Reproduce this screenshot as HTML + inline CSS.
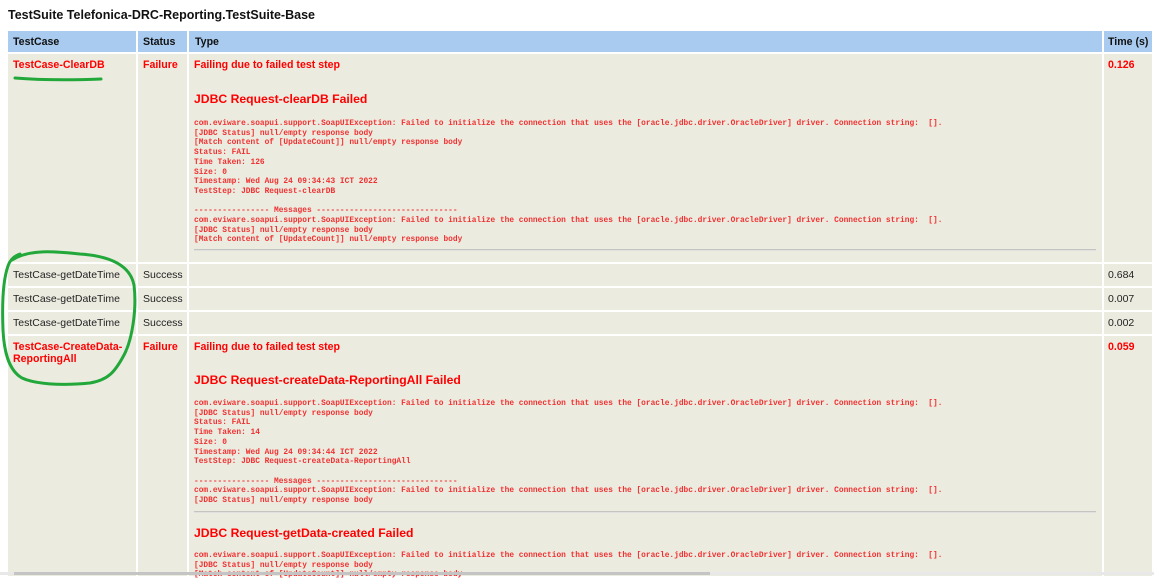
<!DOCTYPE html>
<html><head><meta charset="utf-8"><style>
*{margin:0;padding:0;box-sizing:border-box}
body{width:1154px;height:575px;overflow:hidden;background:#fff;position:relative;font-family:"Liberation Sans",Arial,sans-serif}
.a{position:absolute}
.h{background:#a9cbef}
.c{background:#ecebe0}
.ht{font-weight:bold;font-size:10.6px;color:#111}
.t{font-size:10.5px;color:#222;white-space:nowrap}
.r{color:#f00;font-weight:bold;font-size:10.6px;white-space:nowrap}
.j{color:#f00;font-weight:bold;font-size:12.2px;white-space:nowrap}
.m{font-family:"Liberation Mono",monospace;font-size:7.85px;line-height:9.7px;color:#f03030;white-space:pre;font-weight:bold}
.hr{height:2px;background:#c4c4c0;border-bottom:1px solid #e0e0e0}
</style></head><body>
<div class="a" style="left:8px;top:8px;font-size:12.5px;font-weight:bold;color:#111">TestSuite Telefonica-DRC-Reporting.TestSuite-Base</div>

<div class="a h" style="left:8px;top:31px;width:128px;height:21px"></div>
<div class="a h" style="left:138px;top:31px;width:49px;height:21px"></div>
<div class="a h" style="left:189px;top:31px;width:913px;height:21px"></div>
<div class="a h" style="left:1104px;top:31px;width:48px;height:21px"></div>
<div class="a ht" style="left:13px;top:36px">TestCase</div>
<div class="a ht" style="left:143px;top:36px">Status</div>
<div class="a ht" style="left:195px;top:36px">Type</div>
<div class="a ht" style="left:1108px;top:36px">Time (s)</div>

<div class="a c" style="left:8px;top:54px;width:128px;height:208px"></div>
<div class="a c" style="left:138px;top:54px;width:49px;height:208px"></div>
<div class="a c" style="left:189px;top:54px;width:913px;height:208px"></div>
<div class="a c" style="left:1104px;top:54px;width:48px;height:208px"></div>

<div class="a c" style="left:8px;top:264px;width:128px;height:22px"></div>
<div class="a c" style="left:138px;top:264px;width:49px;height:22px"></div>
<div class="a c" style="left:189px;top:264px;width:913px;height:22px"></div>
<div class="a c" style="left:1104px;top:264px;width:48px;height:22px"></div>
<div class="a c" style="left:8px;top:288px;width:128px;height:22px"></div>
<div class="a c" style="left:138px;top:288px;width:49px;height:22px"></div>
<div class="a c" style="left:189px;top:288px;width:913px;height:22px"></div>
<div class="a c" style="left:1104px;top:288px;width:48px;height:22px"></div>
<div class="a c" style="left:8px;top:312px;width:128px;height:22px"></div>
<div class="a c" style="left:138px;top:312px;width:49px;height:22px"></div>
<div class="a c" style="left:189px;top:312px;width:913px;height:22px"></div>
<div class="a c" style="left:1104px;top:312px;width:48px;height:22px"></div>

<div class="a c" style="left:8px;top:336px;width:128px;height:240px"></div>
<div class="a c" style="left:138px;top:336px;width:49px;height:240px"></div>
<div class="a c" style="left:189px;top:336px;width:913px;height:240px"></div>
<div class="a c" style="left:1104px;top:336px;width:48px;height:240px"></div>

<div class="a r" style="left:13px;top:59px">TestCase-ClearDB</div>
<div class="a r" style="left:143px;top:59px">Failure</div>
<div class="a r" style="left:194px;top:59px">Failing due to failed test step</div>
<div class="a r" style="left:1108px;top:59px">0.126</div>
<div class="a j" style="left:194px;top:92px">JDBC Request-clearDB Failed</div>
<div class="a m" style="left:194px;top:119px">com.eviware.soapui.support.SoapUIException: Failed to initialize the connection that uses the [oracle.jdbc.driver.OracleDriver] driver. Connection string:  [].
[JDBC Status] null/empty response body
[Match content of [UpdateCount]] null/empty response body
Status: FAIL
Time Taken: 126
Size: 0
Timestamp: Wed Aug 24 09:34:43 ICT 2022
TestStep: JDBC Request-clearDB

---------------- Messages ------------------------------
com.eviware.soapui.support.SoapUIException: Failed to initialize the connection that uses the [oracle.jdbc.driver.OracleDriver] driver. Connection string:  [].
[JDBC Status] null/empty response body
[Match content of [UpdateCount]] null/empty response body</div>
<div class="a hr" style="left:194px;top:249px;width:902px"></div>

<div class="a t" style="left:13px;top:269px">TestCase-getDateTime</div>
<div class="a t" style="left:143px;top:269px">Success</div>
<div class="a t" style="left:1108px;top:269px">0.684</div>
<div class="a t" style="left:13px;top:293px">TestCase-getDateTime</div>
<div class="a t" style="left:143px;top:293px">Success</div>
<div class="a t" style="left:1108px;top:293px">0.007</div>
<div class="a t" style="left:13px;top:317px">TestCase-getDateTime</div>
<div class="a t" style="left:143px;top:317px">Success</div>
<div class="a t" style="left:1108px;top:317px">0.002</div>

<div class="a r" style="left:13px;top:341px;line-height:12px">TestCase-CreateData-<br>ReportingAll</div>
<div class="a r" style="left:143px;top:341px">Failure</div>
<div class="a r" style="left:194px;top:341px">Failing due to failed test step</div>
<div class="a r" style="left:1108px;top:341px">0.059</div>
<div class="a j" style="left:194px;top:373px">JDBC Request-createData-ReportingAll Failed</div>
<div class="a m" style="left:194px;top:399px">com.eviware.soapui.support.SoapUIException: Failed to initialize the connection that uses the [oracle.jdbc.driver.OracleDriver] driver. Connection string:  [].
[JDBC Status] null/empty response body
Status: FAIL
Time Taken: 14
Size: 0
Timestamp: Wed Aug 24 09:34:44 ICT 2022
TestStep: JDBC Request-createData-ReportingAll

---------------- Messages ------------------------------
com.eviware.soapui.support.SoapUIException: Failed to initialize the connection that uses the [oracle.jdbc.driver.OracleDriver] driver. Connection string:  [].
[JDBC Status] null/empty response body</div>
<div class="a hr" style="left:194px;top:511px;width:902px"></div>
<div class="a j" style="left:194px;top:526px">JDBC Request-getData-created Failed</div>
<div class="a m" style="left:194px;top:551px">com.eviware.soapui.support.SoapUIException: Failed to initialize the connection that uses the [oracle.jdbc.driver.OracleDriver] driver. Connection string:  [].
[JDBC Status] null/empty response body
[Match content of [UpdateCount]] null/empty response body</div>

<div class="a" style="left:0;top:572px;width:1154px;height:3px;background:#e8e8e8"></div>
<div class="a" style="left:14px;top:572px;width:696px;height:3px;background:#c4c4c4"></div>

<svg class="a" style="left:0;top:0" width="1154" height="575">
<path d="M15 78 C40 80 75 80 101 79" stroke="#22a83a" stroke-width="3" fill="none" stroke-linecap="round"/>
<path d="M12 260 C30 248 60 252 80 254 C110 256 130 265 134 285 C137 310 132 340 124 355 C115 372 108 380 90 383 C60 386 35 384 22 378 C8 370 4 350 3 330 C2 305 3 280 8 266 C10 260 14 256 20 254" stroke="#22a83a" stroke-width="3" fill="none" stroke-linecap="round"/>
</svg>
</body></html>
